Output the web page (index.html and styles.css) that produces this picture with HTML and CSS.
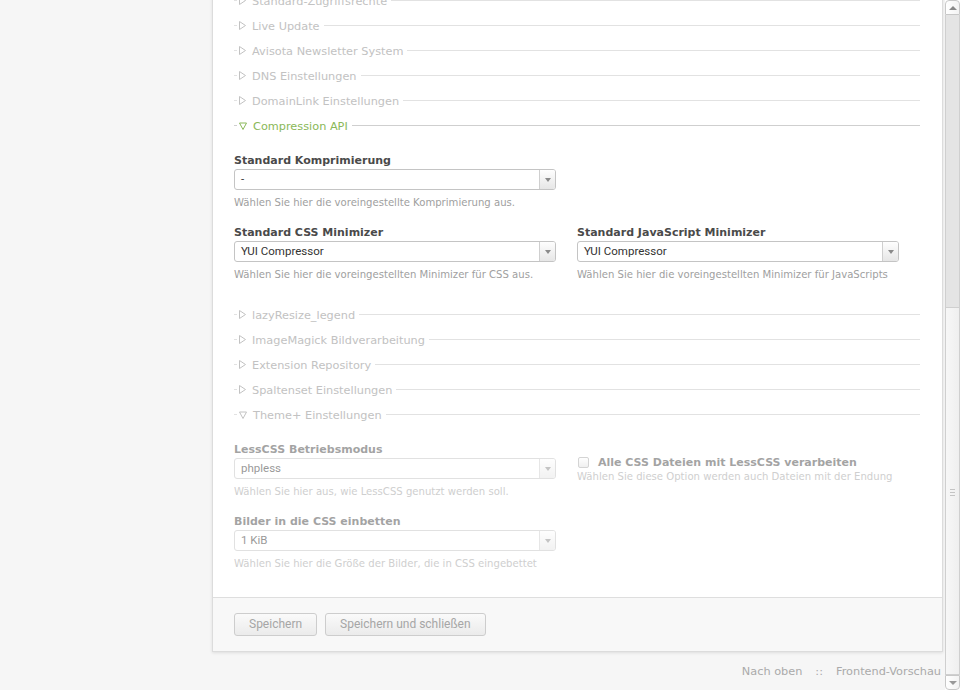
FILE: index.html
```html
<!DOCTYPE html>
<html lang="de">
<head>
<meta charset="utf-8">
<title>Einstellungen</title>
<link rel="stylesheet" href="styles.css">
</head>
<body>
<div class="main">
  <div class="panel">
    <div class="form-body">
      <div class="legend"><svg class="arr" width="7" height="9" viewBox="0 0 7 9"><path d="M.5 .5 L6.5 4.5 L.5 8.5 Z" fill="none" stroke="currentColor"/></svg><span>Standard-Zugriffsrechte</span></div>
      <div class="legend"><svg class="arr" width="7" height="9" viewBox="0 0 7 9"><path d="M.5 .5 L6.5 4.5 L.5 8.5 Z" fill="none" stroke="currentColor"/></svg><span>Live Update</span></div>
      <div class="legend"><svg class="arr" width="7" height="9" viewBox="0 0 7 9"><path d="M.5 .5 L6.5 4.5 L.5 8.5 Z" fill="none" stroke="currentColor"/></svg><span>Avisota Newsletter System</span></div>
      <div class="legend"><svg class="arr" width="7" height="9" viewBox="0 0 7 9"><path d="M.5 .5 L6.5 4.5 L.5 8.5 Z" fill="none" stroke="currentColor"/></svg><span>DNS Einstellungen</span></div>
      <div class="legend"><svg class="arr" width="7" height="9" viewBox="0 0 7 9"><path d="M.5 .5 L6.5 4.5 L.5 8.5 Z" fill="none" stroke="currentColor"/></svg><span>DomainLink Einstellungen</span></div>
      <div class="legend open"><svg class="arr" width="8" height="8" viewBox="0 0 8 8"><path d="M.5 1 L7.5 1 L4 7.5 Z" fill="none" stroke="currentColor"/></svg><span>Compression API</span></div>
      <div class="fields">
        <div class="widget">
          <div class="lbl">Standard Komprimierung</div>
          <div class="select"><span class="val">-</span><span class="btn"><i class="tri"></i></span></div>
          <div class="help">Wählen Sie hier die voreingestellte Komprimierung aus.</div>
        </div>
        <div class="widget clr">
          <div class="lbl">Standard CSS Minimizer</div>
          <div class="select"><span class="val">YUI Compressor</span><span class="btn"><i class="tri"></i></span></div>
          <div class="help">Wählen Sie hier die voreingestellten Minimizer für CSS aus.</div>
        </div>
        <div class="widget">
          <div class="lbl">Standard JavaScript Minimizer</div>
          <div class="select"><span class="val">YUI Compressor</span><span class="btn"><i class="tri"></i></span></div>
          <div class="help">Wählen Sie hier die voreingestellten Minimizer für JavaScripts</div>
        </div>
      </div>
      <div class="legend"><svg class="arr" width="7" height="9" viewBox="0 0 7 9"><path d="M.5 .5 L6.5 4.5 L.5 8.5 Z" fill="none" stroke="currentColor"/></svg><span>lazyResize_legend</span></div>
      <div class="legend"><svg class="arr" width="7" height="9" viewBox="0 0 7 9"><path d="M.5 .5 L6.5 4.5 L.5 8.5 Z" fill="none" stroke="currentColor"/></svg><span>ImageMagick Bildverarbeitung</span></div>
      <div class="legend"><svg class="arr" width="7" height="9" viewBox="0 0 7 9"><path d="M.5 .5 L6.5 4.5 L.5 8.5 Z" fill="none" stroke="currentColor"/></svg><span>Extension Repository</span></div>
      <div class="legend"><svg class="arr" width="7" height="9" viewBox="0 0 7 9"><path d="M.5 .5 L6.5 4.5 L.5 8.5 Z" fill="none" stroke="currentColor"/></svg><span>Spaltenset Einstellungen</span></div>
      <div class="legend"><svg class="arr" width="8" height="8" viewBox="0 0 8 8"><path d="M.5 1 L7.5 1 L4 7.5 Z" fill="none" stroke="currentColor"/></svg><span>Theme+ Einstellungen</span></div>
      <div class="fields muted">
        <div class="widget">
          <div class="lbl">LessCSS Betriebsmodus</div>
          <div class="select"><span class="val">phpless</span><span class="btn"><i class="tri"></i></span></div>
          <div class="help">Wählen Sie hier aus, wie LessCSS genutzt werden soll.</div>
        </div>
        <div class="widget check">
          <div class="checkrow"><span class="box"></span><span class="lbl">Alle CSS Dateien mit LessCSS verarbeiten</span></div>
          <div class="help nomargin">Wählen Sie diese Option werden auch Dateien mit der Endung</div>
        </div>
        <div class="widget clr">
          <div class="lbl">Bilder in die CSS einbetten</div>
          <div class="select"><span class="val">1 KiB</span><span class="btn"><i class="tri"></i></span></div>
          <div class="help">Wählen Sie hier die Größe der Bilder, die in CSS eingebettet</div>
        </div>
      </div>
    </div>
    <div class="submit">
      <button class="button" type="button">Speichern</button>
      <button class="button" type="button">Speichern und schließen</button>
    </div>
  </div>
  <div class="footer"><span>Nach oben</span><span class="sep">::</span><span>Frontend-Vorschau</span></div>
</div>
<div class="scrollbar">
  <div class="sb-btn up"><i class="sb-tri-up"></i></div>
  <div class="sb-track"></div>
  <div class="sb-thumb"><i class="grip"></i></div>
  <div class="sb-btn down"><i class="sb-tri-down"></i></div>
</div>
</body>
</html>
```
FILE: styles.css
```css
html, body {
  margin: 0;
  height: 100%;
  overflow: hidden;
}
body {
  background: #f6f6f6;
  font-family: "DejaVu Sans", Verdana, sans-serif;
  font-size: 11px;
  color: #4a4a4a;
  display: flex;
}
.main {
  width: 945px;
  padding-left: 212px;
  box-sizing: border-box;
  flex: none;
}
.panel {
  width: 731px;
  margin-top: -12px;
  background: #fff;
  border: 1px solid #dcdcdc;
  border-top: 0;
  box-sizing: border-box;
  box-shadow: 0 1px 3px rgba(0, 0, 0, 0.1);
}
.form-body {
  padding: 0 22px 6px 21px;
}
.legend {
  display: flex;
  align-items: center;
  height: 25px;
  color: #c2c2c2;
  font-size: 11.3px;
  white-space: nowrap;
}
.legend span {
  padding-top: 2px;
}
.legend::before {
  content: "";
  width: 3px;
  height: 1px;
  background: #e2e2e2;
  margin-right: 2px;
  flex: none;
}
.legend .arr {
  flex: none;
  margin-right: 6px;
}
.legend::after {
  content: "";
  flex: 1;
  height: 1px;
  background: #e2e2e2;
  margin-left: 4px;
}
.legend.open {
  color: #8ab858;
}
.legend.open::after,
.legend.open::before {
  background: #cfcfcf;
}
.fields {
  display: grid;
  grid-template-columns: 343px 343px;
  padding-bottom: 20px;
}
.widget {
  padding-top: 15px;
}
.widget.clr {
  grid-column: 1;
}
.lbl {
  font-weight: bold;
  line-height: 14px;
  padding-top: 1px;
  color: #4a4a4a;
  white-space: nowrap;
}
.select {
  margin-top: 1px;
  width: 322px;
  height: 21px;
  box-sizing: border-box;
  border: 1px solid #c4c4c4;
  border-radius: 3px;
  display: flex;
  font-family: Roboto, "Liberation Sans", sans-serif;
  font-size: 11.5px;
  color: #333;
}
.select .val {
  flex: 1;
  padding-left: 6px;
  line-height: 19px;
}
.select .btn {
  width: 15px;
  border-left: 1px solid #cfcfcf;
  border-radius: 0 2px 2px 0;
  background: linear-gradient(#fefefe, #e6e6e6);
  display: flex;
  align-items: center;
  justify-content: center;
}
.tri {
  width: 0;
  height: 0;
  border-left: 3px solid transparent;
  border-right: 3px solid transparent;
  border-top: 4px solid #8a8a8a;
}
.help {
  margin-top: 6px;
  font-size: 10.1px;
  line-height: 14px;
  color: #a0a0a0;
  white-space: nowrap;
}
.help.nomargin {
  margin-top: 0;
}
.muted > .widget {
  opacity: 0.5;
}
.widget.check {
  padding-top: 28px;
}
.checkrow {
  display: flex;
  align-items: center;
  height: 15px;
}
.checkrow .lbl {
  padding-top: 0;
}
.box {
  width: 9px;
  height: 9px;
  margin-left: 1px;
  margin-right: 9px;
  border: 1px solid #aaa;
  border-radius: 2px;
  background: linear-gradient(#fff, #e2e2e2);
}
.submit {
  border-top: 1px solid #dedede;
  background: #f8f8f8;
  padding: 15px 21px;
  display: flex;
  gap: 8px;
}
.button {
  height: 23px;
  padding: 0 14px;
  margin: 0;
  border: 1px solid #cdcdcd;
  border-radius: 3px;
  background: linear-gradient(#fafafa, #ebebeb);
  color: #a6a6a6;
  font-family: Roboto, "Liberation Sans", sans-serif;
  font-size: 12px;
  line-height: 21px;
}
.footer {
  width: 731px;
  padding-top: 13px;
  line-height: 14px;
  font-size: 11.3px;
  text-align: right;
  color: #aaa;
  box-sizing: border-box;
  padding-right: 2px;
}
.footer .sep {
  margin: 0 13px;
}
.scrollbar {
  width: 15px;
  height: 690px;
  flex: none;
  display: flex;
  flex-direction: column;
  background: #fff;
}
.sb-btn {
  height: 15px;
  box-sizing: border-box;
  border: 1px solid #c8c8c8;
  background: linear-gradient(to right, #fff, #f3f3f3);
  display: flex;
  align-items: center;
  justify-content: center;
}
.sb-btn.up {
  border-radius: 4px 4px 0 0;
}
.sb-btn.down {
  border-radius: 0 0 4px 4px;
}
.sb-tri-up {
  width: 0;
  height: 0;
  border-left: 4px solid transparent;
  border-right: 4px solid transparent;
  border-bottom: 4px solid #888;
}
.sb-tri-down {
  width: 0;
  height: 0;
  border-left: 4px solid transparent;
  border-right: 4px solid transparent;
  border-top: 4px solid #999;
}
.sb-track {
  height: 292px;
  box-sizing: border-box;
  border-left: 1px solid #cfcfcf;
  border-right: 1px solid #cfcfcf;
  background: #e4e4e4;
}
.sb-thumb {
  flex: 1;
  box-sizing: border-box;
  border: 1px solid #cfcfcf;
  background: linear-gradient(to right, #f7f7f7, #efefef);
  display: flex;
  align-items: center;
  justify-content: center;
}
.grip {
  width: 5px;
  height: 5px;
  border-top: 1px solid #c4c4c4;
  border-bottom: 1px solid #c4c4c4;
  background: linear-gradient(#c4c4c4, #c4c4c4) center / 5px 1px no-repeat;
  margin-top: 2px;
}
```
